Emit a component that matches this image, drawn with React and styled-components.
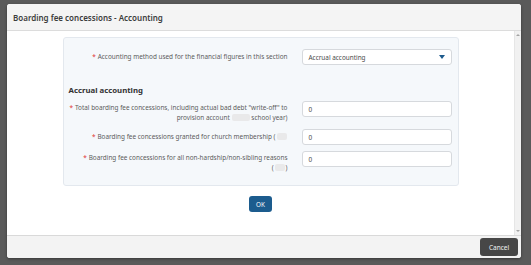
import React from "react";
import styled, { createGlobalStyle } from "styled-components";

const GlobalStyle = createGlobalStyle`
  html, body {
    margin: 0;
    padding: 0;
    background: #585858;
    font-family: "Noto Sans", "Open Sans", sans-serif;
  }
  * {
    box-sizing: border-box;
  }
`

const Backdrop = styled.div`
  width: 531px;
  height: 265px;
  padding: 4px 10px 7px 7px;
  background: #5a5a5a;
`

const Modal = styled.div`
  display: flex;
  flex-direction: column;
  width: 514px;
  height: 254px;
  background: #ffffff;
  border-radius: 3px;
  overflow: hidden;
  box-shadow: 0 1px 3px rgba(0, 0, 0, 0.4);
`

const Header = styled.div`
  display: flex;
  align-items: center;
  height: 27px;
  padding: 0 6px;
  background: #f4f4f4;
  border-bottom: 1px solid #dcdcdc;
  font-size: 8px;
  font-weight: 600;
  color: #3c3c3c;
`

const BodyWrap = styled.div`
  display: flex;
  flex: 1;
  min-height: 0;
`

const Body = styled.div`
  flex: 1;
  display: flex;
  flex-direction: column;
  align-items: center;
  padding-top: 6px;
`

const Scrollbar = styled.div`
  display: flex;
  flex-direction: column;
  justify-content: space-between;
  align-items: center;
  width: 7px;
  padding: 3px 0;
  background: #f1f1f1;
  border-left: 1px solid #e6e6e6;
`

const Arrow = styled.div`
  width: 0;
  height: 0;
  border-left: 2px solid transparent;
  border-right: 2px solid transparent;
  ${props => props.up
    ? "border-bottom: 2px solid #a3a3a3;"
    : "border-top: 2px solid #a3a3a3;"}
`

const Panel = styled.div`
  width: 396px;
  height: 149px;
  padding: 11px 8px 0 0;
  background: #f5f8fb;
  border: 1px solid #e3e8ee;
  border-radius: 3px;
`

const Grid = styled.div`
  display: grid;
  grid-template-columns: 224px 150px;
  column-gap: 14px;
  align-items: start;
`

const Label = styled.div`
  text-align: right;
  font-size: 6.4px;
  line-height: 10px;
  color: #5c5c5c;
  padding-top: ${props => props.top || 3}px;
`

const Star = styled.span`
  color: #e0312f;
  margin-right: 2px;
`

const Blank = styled.span`
  display: inline-block;
  width: ${props => props.w}px;
  height: 7px;
  margin: 0 1px;
  vertical-align: -1px;
  background: #e9e9ea;
  border-radius: 2px;
`

const Field = styled.div`
  display: flex;
  align-items: center;
  justify-content: space-between;
  height: 16px;
  padding: 0 6px;
  background: #ffffff;
  border: 1px solid #d6d9dd;
  border-radius: 3px;
  font-size: 6.4px;
  color: #4a4a4a;
`

const Caret = styled.span`
  width: 0;
  height: 0;
  border-left: 3.5px solid transparent;
  border-right: 3.5px solid transparent;
  border-top: 4px solid #1d5a8c;
`

const Section = styled.div`
  margin: 20px 0 6px 5px;
  font-size: 7.8px;
  font-weight: 700;
  color: #333333;
`

const RowGap = styled.div`
  grid-column: 1 / -1;
  height: ${props => props.h}px;
`

const OkButton = styled.button`
  margin-top: 10px;
  width: 23px;
  height: 16px;
  padding: 0;
  border: none;
  border-radius: 3px;
  background: #1c5c8e;
  color: #ffffff;
  font-family: inherit;
  font-size: 6.3px;
`

const Footer = styled.div`
  display: flex;
  justify-content: flex-end;
  align-items: flex-start;
  height: 23px;
  padding: 2px 3px 0 0;
  background: #f3f3f3;
  border-top: 1px solid #d9d9d9;
`

const CancelButton = styled.button`
  width: 38px;
  height: 18px;
  padding: 0;
  border: none;
  border-radius: 3px;
  background: #474747;
  color: #f2f2f2;
  font-family: inherit;
  font-size: 6.5px;
`

export default function App() {
  return (
    <>
      <GlobalStyle />
      <Backdrop>
        <Modal>
          <Header>Boarding fee concessions - Accounting</Header>
          <BodyWrap>
            <Body>
              <Panel>
                <Grid>
                  <Label>
                    <Star>*</Star>Accounting method used for the financial figures in this section
                  </Label>
                  <Field>
                    Accrual accounting
                    <Caret />
                  </Field>
                </Grid>
                <Section>Accrual accounting</Section>
                <Grid>
                  <Label top={2}>
                    <Star>*</Star>Total boarding fee concessions, including actual bad debt "write-off" to<br />
                    provision account <Blank w={18} />school year)
                  </Label>
                  <Field>0</Field>
                  <RowGap h={6} />
                  <Label>
                    <Star>*</Star>Boarding fee concessions granted for church membership (<Blank w={10} />
                  </Label>
                  <Field>0</Field>
                  <RowGap h={6} />
                  <Label top={2}>
                    <Star>*</Star>Boarding fee concessions for all non-hardship/non-sibling reasons<br />
                    (<Blank w={10} />)
                  </Label>
                  <Field>0</Field>
                </Grid>
              </Panel>
              <OkButton>OK</OkButton>
            </Body>
            <Scrollbar>
              <Arrow up />
              <Arrow />
            </Scrollbar>
          </BodyWrap>
          <Footer>
            <CancelButton>Cancel</CancelButton>
          </Footer>
        </Modal>
      </Backdrop>
    </>
  );
}
